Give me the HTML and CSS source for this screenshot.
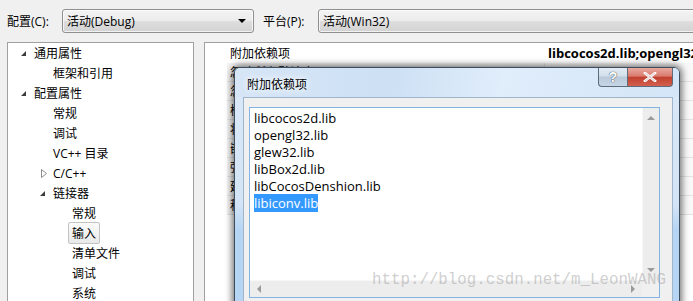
FILE: index.html
```html
<!DOCTYPE html>
<html lang="zh-CN">

<head>
  <meta charset="UTF-8" />
  <title>链接器 输入 属性页</title>
  <link rel="stylesheet" href="styles.css">
</head>

<body>

  <!-- Configuration bar -->
  <div class="toolbar">
    <span class="tb-label">配置(C):</span>
    <div class="combo combo-config">
      <span>活动(Debug)</span>
      <span class="caret"></span>
    </div>
    <span class="tb-label tb-label-platform">平台(P):</span>
    <div class="combo combo-platform">
      <span>活动(Win32)</span>
    </div>
  </div>

  <div class="main">
    <!-- Property tree -->
    <div class="tree">
      <div class="node l0"><span class="exp open"></span>通用属性</div>
      <div class="node l1"><span class="exp"></span>框架和引用</div>
      <div class="node l0"><span class="exp open"></span>配置属性</div>
      <div class="node l1"><span class="exp"></span>常规</div>
      <div class="node l1"><span class="exp"></span>调试</div>
      <div class="node l1"><span class="exp"></span>VC++ 目录</div>
      <div class="node l1"><span class="exp closed"><svg width="6" height="9" viewBox="0 0 6 9"><path d="M0.5 0.5 L5.5 4.5 L0.5 8.5 Z" fill="#fff" stroke="#8c8c8c" stroke-width="1"/></svg></span>C/C++</div>
      <div class="node l1"><span class="exp open"></span>链接器</div>
      <div class="node l2"><span class="exp"></span>常规</div>
      <div class="node l2"><span class="exp"></span><span class="selected">输入</span></div>
      <div class="node l2"><span class="exp"></span>清单文件</div>
      <div class="node l2"><span class="exp"></span>调试</div>
      <div class="node l2"><span class="exp"></span>系统</div>
    </div>

    <!-- Property grid -->
    <div class="props">
      <div class="prop-row head">
        <span class="prop-name">附加依赖项</span>
        <span class="prop-value">libcocos2d.lib;opengl32.lib;glew32.lib;libBox2d.lib;libCocosDenshion.lib;libiconv.lib</span>
      </div>
      <div class="prop-row"><span class="prop-name">忽略所有默认库</span><span class="prop-value"></span></div>
      <div class="prop-row"><span class="prop-name">忽略特定默认库</span><span class="prop-value"></span></div>
      <div class="prop-row"><span class="prop-name">模块定义文件</span><span class="prop-value"></span></div>
      <div class="prop-row"><span class="prop-name">将模块添加到程序集</span><span class="prop-value"></span></div>
      <div class="prop-row"><span class="prop-name">嵌入托管资源文件</span><span class="prop-value"></span></div>
      <div class="prop-row"><span class="prop-name">强制符号引用</span><span class="prop-value"></span></div>
      <div class="prop-row"><span class="prop-name">延迟加载的 DLL</span><span class="prop-value"></span></div>
      <div class="prop-row"><span class="prop-name">程序集链接资源</span><span class="prop-value"></span></div>
    </div>
  </div>

  <!-- Dialog window -->
  <div class="dialog">
    <div class="title-bar">
      <span class="title">附加依赖项</span>
      <div class="caption-btns">
        <div class="cap-btn help">?</div>
        <div class="cap-btn close">
          <svg width="14" height="10" viewBox="0 0 14 10"><path d="M2 1 L12 9 M12 1 L2 9" stroke="#fff" stroke-width="2.6" stroke-linecap="square"/><path d="M2 1 L12 9 M12 1 L2 9" stroke="#5a1a14" stroke-width="0.6" opacity="0.4"/></svg>
        </div>
      </div>
    </div>
    <div class="client">
      <div class="editbox">
        <div class="lines">
          <div>libcocos2d.lib</div>
          <div>opengl32.lib</div>
          <div>glew32.lib</div>
          <div>libBox2d.lib</div>
          <div>libCocosDenshion.lib</div>
          <div><span class="sel">libiconv.lib</span></div>
        </div>
        <div class="vscroll">
          <span class="arr up"></span>
          <span class="arr down"></span>
        </div>
        <div class="hscroll">
          <span class="arr left"></span>
          <span class="arr right"></span>
        </div>
        <div class="corner"></div>
      </div>
    </div>
  </div>

  <div class="watermark">http://blog.csdn.net/m_LeonWANG</div>

</body>

</html>
```

FILE: styles.css
```css
* {
  margin: 0;
  padding: 0;
  box-sizing: border-box;
}

html,
body {
  width: 693px;
  height: 301px;
  overflow: hidden;
}

body {
  position: relative;
  background-color: #f0f0f0;
  font-family: "Open Sans", "Noto Sans CJK SC", sans-serif;
  font-size: 12px;
  color: #000;
}

/* ---------- top bar ---------- */

.toolbar {
  display: flex;
  align-items: center;
  height: 42px;
  padding: 9px 0 9px 7px;
}

.tb-label {
  width: 55px;
  flex-shrink: 0;
}

.tb-label-platform {
  margin-left: 9px;
}

.combo {
  display: flex;
  align-items: center;
  justify-content: space-between;
  height: 24px;
  padding: 0 4px;
  border: 1px solid #8e8f8f;
  border-radius: 3px;
  background: linear-gradient(#f3f3f3 0%, #ececec 48%, #dedede 52%, #d2d2d2 100%);
  box-shadow: inset 0 0 0 1px rgba(255, 255, 255, 0.7);
  flex-shrink: 0;
}

.combo-config {
  width: 192px;
}

.combo-platform {
  width: 400px;
}

.caret {
  width: 0;
  height: 0;
  margin-right: 3px;
  border-left: 4px solid transparent;
  border-right: 4px solid transparent;
  border-top: 4px solid #000;
}

/* ---------- main area ---------- */

.main {
  display: flex;
  gap: 10px;
  padding-left: 7px;
  height: 300px;
}

.tree {
  width: 187px;
  flex-shrink: 0;
  background-color: #fff;
  border: 1px solid #a0a0a0;
  border-bottom: none;
}

.node {
  display: flex;
  align-items: center;
  height: 20px;
  white-space: nowrap;
}

.node.l0 {
  padding-left: 12px;
}

.node.l1 {
  padding-left: 31px;
}

.node.l2 {
  padding-left: 50px;
}

.exp {
  display: inline-flex;
  align-items: center;
  width: 14px;
  height: 20px;
  flex-shrink: 0;
}

.exp.open::before {
  content: "";
  width: 0;
  height: 0;
  border-style: solid;
  border-width: 0 0 5px 5px;
  border-color: transparent transparent #3c3c3c transparent;
  margin-left: 1px;
}

.exp.closed svg {
  margin-left: 2px;
}

.selected {
  margin-left: -4px;
  padding: 1px 3px;
  border: 1px solid #c3c3c3;
  border-radius: 2px;
  background: linear-gradient(#fbfbfb, #e9e9e9);
}

.props {
  flex: 1;
  background-color: #fff;
  border-left: 1px solid #a0a0a0;
  border-top: 1px solid #a0a0a0;
  padding-left: 22px;
  margin-right: -20px;
}

.prop-row {
  display: flex;
  height: 19px;
  align-items: center;
  border-bottom: 1px solid #e3e3e3;
  white-space: nowrap;
}

.prop-row.head {
  height: 20px;
  border-bottom: none;
}

.prop-name {
  width: 318px;
  height: 100%;
  display: flex;
  align-items: center;
  padding-left: 3px;
  background-color: #f5f5f5;
  border-right: 1px solid #e3e3e3;
  overflow: hidden;
}

.prop-row.head .prop-name {
  background-color: #fff;
  border-right: none;
}

.prop-value {
  flex: 1;
  height: 100%;
  display: flex;
  align-items: center;
  padding-left: 3px;
  background-color: #f9f9f9;
  overflow: hidden;
}

.prop-row.head .prop-value {
  background-color: #fff;
  font-weight: bold;
  font-size: 13px;
}

/* ---------- dialog ---------- */

.dialog {
  position: absolute;
  left: 234px;
  top: 67px;
  width: 446px;
  height: 250px;
  border: 1px solid #3e4d5e;
  border-radius: 6px 6px 0 0;
  background: linear-gradient(#dbe9f8 0%, #d3e4f6 55%, #b6d5f4 65%, #b6d5f4 100%);
  box-shadow: 0 0 7px 2px rgba(0, 0, 0, 0.55);
  display: flex;
  flex-direction: column;
}

.title-bar {
  display: flex;
  justify-content: space-between;
  height: 29px;
  flex-shrink: 0;
  background: linear-gradient(100deg, #d6e6f7 0%, #cde0f4 35%, #e0edfb 60%, #d3e5f7 100%);
  border-radius: 5px 5px 0 0;
}

.title {
  padding: 7px 0 0 12px;
  color: #000;
  text-shadow: 0 0 6px #fff, 0 0 8px #fff;
}

.caption-btns {
  display: flex;
  margin-right: 6px;
  height: 20px;
}

.cap-btn {
  display: flex;
  align-items: center;
  justify-content: center;
  height: 19px;
  border: 1px solid #5d6b7b;
  border-top: none;
}

.cap-btn.help {
  width: 29px;
  border-radius: 0 0 0 4px;
  border-right: none;
  background: linear-gradient(#e2ebf4 0%, #d2dfeb 45%, #b9c9d9 50%, #c7d6e5 100%);
  color: #fff;
  font-family: "Liberation Sans", sans-serif;
  font-weight: bold;
  font-size: 14px;
  text-shadow: 0 0 1px #3a4a5a, 0 0 1px #3a4a5a;
}

.cap-btn.close {
  width: 46px;
  border-radius: 0 0 4px 0;
  background: linear-gradient(#e9a99f 0%, #da7b6e 45%, #c2402f 52%, #d3604f 100%);
}

.client {
  flex: 1;
  margin: 0 6px 0 8px;
  background-color: #f0f0f0;
  border: 1px solid #9fb5cc;
  border-bottom: none;
  padding: 9px 12px 0 5px;
}

.editbox {
  position: relative;
  height: 191px;
  background-color: #fff;
  border: 1px solid #82b3e3;
}

.lines {
  padding: 2px 0 0 4px;
  font-size: 13px;
  line-height: 17px;
}

.sel {
  background-color: #3399ff;
  color: #fff;
}

.vscroll {
  position: absolute;
  top: 0;
  right: 0;
  width: 17px;
  bottom: 17px;
  background-color: #ededed;
  border-left: 1px solid #f7f7f7;
}

.hscroll {
  position: absolute;
  left: 0;
  right: 17px;
  bottom: 0;
  height: 17px;
  background-color: #ededed;
  border-top: 1px solid #f7f7f7;
}

.corner {
  position: absolute;
  right: 0;
  bottom: 0;
  width: 17px;
  height: 17px;
  background-color: #f0f0f0;
}

.arr {
  position: absolute;
  width: 0;
  height: 0;
  border-style: solid;
}

.arr.up {
  top: 8px;
  left: 4px;
  border-width: 0 4px 4px 4px;
  border-color: transparent transparent #9a9a9a transparent;
}

.arr.down {
  bottom: 8px;
  left: 4px;
  border-width: 4px 4px 0 4px;
  border-color: #9a9a9a transparent transparent transparent;
}

.arr.left {
  left: 7px;
  top: 4px;
  border-width: 4px 4px 4px 0;
  border-color: transparent #9a9a9a transparent transparent;
}

.arr.right {
  right: 7px;
  top: 4px;
  border-width: 4px 0 4px 4px;
  border-color: transparent transparent transparent #9a9a9a;
}

/* ---------- watermark ---------- */

.watermark {
  position: absolute;
  left: 372px;
  top: 271px;
  font-family: "Liberation Mono", monospace;
  font-size: 15.8px;
  color: rgba(160, 160, 160, 0.5);
  white-space: nowrap;
  pointer-events: none;
}
```
